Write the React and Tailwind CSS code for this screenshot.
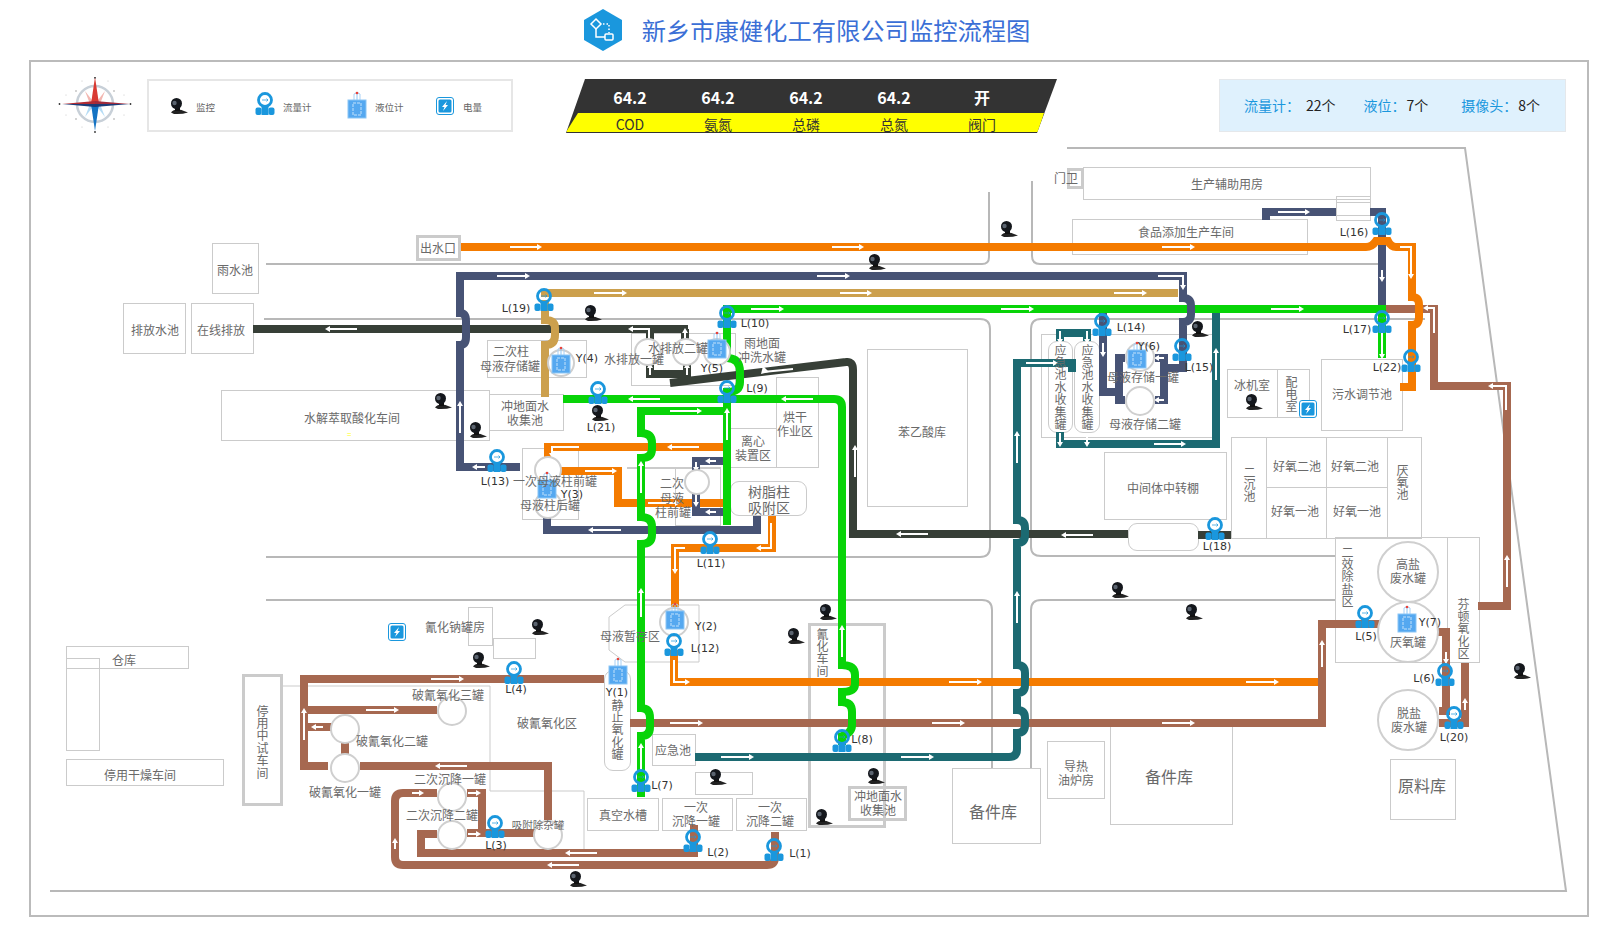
import React from 'react';

const PIPE = {
  orange: '#f47b00',
  navy: '#475375',
  tan: '#cca04d',
  green: '#08d408',
  dark: '#373f37',
  teal: '#1c6a72',
  brown: '#a66850',
};

// drawing order matters, the later pipe hops over the earlier one
const pipes = [
  ['dark', 'M253 329 H688'],
  ['dark', 'M650 329 V340'],
  ['dark', 'M685 329 V340'],
  ['dark', 'M650 362 V374 H687 V362'],
  ['dark', 'M670 383 L846 362 Q853 361 853 370 V534 H1128'],
  ['dark', 'M1198 535 H1231'],
  ['brown', 'M604 679 H304 V766 H328'],
  ['brown', 'M304 710 H437'],
  ['brown', 'M308 727 H335'],
  ['brown', 'M345 743 V755'],
  ['brown', 'M360 766 H548 V820'],
  ['brown', 'M775 832 V857 Q775 865 767 865 H403 Q395 865 395 857 V801 Q395 793 403 793 H437'],
  ['brown', 'M467 793 H482 V833'],
  ['brown', 'M467 833 H535'],
  ['brown', 'M437 834 H421 V853 H698'],
  ['brown', 'M694 825 V857'],
  ['brown', 'M630 723 H1322 V624 H1380'],
  ['brown', 'M1438 632 H1446 V711 H1439'],
  ['brown', 'M1439 723 H1465 V663'],
  ['brown', 'M1386 309 H1434 V386 H1507 V606 H1478'],
  ['orange', 'M548 457 V447 H723'],
  ['orange', 'M560 471 H618 V503 H723'],
  ['orange', 'M772 516 V548 H675 V607'],
  ['orange', 'M674 650 V682 H1318'],
  ['navy', 'M547 514 V530 H757 V516'],
  ['navy', 'M723 461 H696 V470'],
  ['navy', 'M723 512 H696 V493'],
  ['tan', 'M541 293 H1178'],
  ['tan', 'M545 397 V345 Q555 345 555 335 V328 Q555 320 545 320 V300'],
  ['green', 'M1386 309 H727 V358 Q740 358 740 372 V382 Q740 392 727 392 V525'],
  ['green', 'M563 399 H834 Q842 399 842 407 V665 Q855 665 855 675 V684 Q855 692 842 692 V702 Q852 702 852 712 V725 Q852 733 842 736 V745'],
  ['green', 'M727 411 H641 V433 Q652 433 652 443 V449 Q652 458 641 458 V517 Q652 517 652 527 V535 Q652 544 641 544 V708 Q650 708 650 718 V727 Q650 736 641 736 V797'],
  ['green', 'M1382 309 V358'],
  ['navy', 'M520 467 H460 V345 Q466 345 466 337 V321 Q466 313 460 313 V276 H1183 V298 Q1191 298 1191 306 V314 Q1191 322 1183 322 V368 H1164'],
  ['navy', 'M1155 358 H1164 V400 H1155'],
  ['navy', 'M1103 313 V392 H1119'],
  ['navy', 'M1125 358 H1119 V400 H1125'],
  ['navy', 'M1266 220 V212 H1336'],
  ['navy', 'M1370 212 H1382 V305'],
  ['orange', 'M461 247 H1366 Q1372 247 1376 241 H1388 Q1391 247 1396 247 H1412 V297 Q1419 297 1419 305 V317 Q1419 325 1412 325 V387 H1400'],
  ['teal', 'M1076 363 H1017 V520 Q1025 520 1025 528 V535 Q1025 543 1017 543 V665 Q1025 665 1025 673 V685 Q1025 693 1017 693 V710 Q1025 710 1025 718 V725 Q1025 733 1017 733 V749 Q1017 757 1009 757 H695'],
  ['teal', 'M1072 359 V372'],
  ['teal', 'M1060 341 V333 H1087 V341'],
  ['teal', 'M1060 432 V444 H1216 V313'],
];

const arrows = [
  [510, 247, 540, 247], [832, 247, 862, 247], [1162, 247, 1193, 247], [1400, 247, 1411, 247, 1411, 277],
  [497, 276, 528, 276], [817, 276, 848, 276], [1158, 276, 1183, 276, 1183, 288],
  [594, 293, 625, 293], [840, 293, 870, 293], [1114, 293, 1145, 293],
  [751, 309, 782, 309], [1001, 309, 1032, 309], [1271, 309, 1302, 309],
  [1278, 212, 1308, 212], [1103, 343, 1103, 355], [1382, 270, 1382, 280], [1382, 330, 1382, 357],
  [1434, 333, 1434, 308, 1425, 308], [1506, 410, 1506, 386, 1490, 386],
  [1216, 380, 1216, 350], [1154, 444, 1184, 444], [1017, 463, 1017, 433], [1026, 363, 1056, 363], [1017, 623, 1017, 593],
  [1060, 331, 1060, 342], [1087, 331, 1087, 342], [1060, 433, 1060, 445], [1087, 433, 1087, 445],
  [1164, 358, 1156, 358], [1164, 400, 1156, 400],
  [357, 329, 327, 329], [649, 340, 649, 329, 630, 329], [685, 343, 685, 330], [650, 375, 650, 365], [687, 375, 687, 365],
  [793, 369, 763, 372], [855, 477, 855, 447], [928, 534, 898, 534], [1093, 535, 1063, 535],
  [460, 433, 460, 403], [485, 467, 474, 467],
  [660, 399, 630, 399], [813, 399, 783, 399], [842, 657, 842, 627],
  [670, 411, 700, 411], [727, 440, 727, 410], [641, 493, 641, 463], [641, 617, 641, 590], [641, 770, 641, 745],
  [699, 447, 669, 447], [579, 447, 552, 447, 552, 456], [585, 471, 615, 471], [648, 503, 678, 503],
  [621, 530, 590, 530], [716, 461, 707, 461], [716, 512, 707, 512], [696, 462, 696, 470], [696, 490, 696, 505],
  [771, 523, 771, 548, 758, 548], [685, 548, 675, 548, 675, 572], [674, 660, 674, 682, 688, 682],
  [949, 682, 980, 682], [1246, 682, 1277, 682],
  [670, 723, 701, 723], [932, 723, 963, 723], [1162, 723, 1193, 723], [1322, 667, 1322, 642], [1507, 587, 1507, 557],
  [1446, 652, 1446, 662], [1465, 710, 1465, 700],
  [431, 679, 462, 679], [366, 710, 397, 710], [323, 727, 313, 727], [304, 740, 304, 710], [467, 766, 437, 766],
  [412, 793, 422, 793], [468, 793, 479, 793], [468, 834, 479, 834], [395, 849, 395, 840], [597, 853, 567, 853], [579, 865, 549, 865],
  [721, 757, 752, 757], [901, 757, 932, 757],
];

const tanks = [
  [648, 352, 13], [686, 352, 13], [717, 352, 13], [561, 363, 13], [548, 470, 13], [548, 505, 13], [697, 482, 12],
  [1140, 357, 14], [1140, 401, 14], [674, 622, 14], [452, 711, 14], [345, 729, 14], [345, 768, 14], [452, 797, 14], [452, 835, 14], [548, 835, 14],
  [1408, 572, 30], [1408, 632, 30], [1408, 720, 30],
];

const flowMeters = [
  [774, 853], [693, 844], [495, 830], [514, 676], [1365, 620], [1445, 678], [641, 784], [842, 744], [727, 395], [727, 320], [710, 546],
  [674, 648], [497, 464], [1102, 328], [1182, 353], [1382, 227], [1382, 325], [1215, 532], [544, 303], [1454, 721], [598, 396], [1411, 364],
];

const levelMeters = [[618, 675], [675, 620], [547, 489], [561, 364], [717, 349], [1137, 359], [1407, 623]];

const cameras = [
  [1008, 229], [876, 262], [592, 313], [1199, 329], [442, 401], [477, 430], [599, 413], [1253, 402], [1119, 590], [1193, 612],
  [827, 612], [795, 636], [539, 627], [480, 660], [717, 777], [875, 776], [823, 817], [577, 879], [1521, 671],
];

// x1, y1, x2, y2, thick
const boxes = [
  [212, 243, 258, 293], [123, 303, 185, 353], [191, 303, 253, 353], [416, 235, 460, 260, 1], [221, 390, 489, 440],
  [487, 340, 586, 377], [489, 394, 563, 430], [631, 333, 735, 385], [776, 377, 818, 467], [730, 428, 776, 467],
  [627, 467, 720, 467], [675, 467, 720, 525], [522, 448, 578, 519], [867, 349, 967, 506], [1041, 334, 1212, 437],
  [1104, 452, 1226, 519], [1067, 168, 1083, 188, 1], [1083, 167, 1370, 199], [1336, 196, 1370, 220], [1336, 202, 1370, 215],
  [1072, 219, 1307, 254], [1321, 359, 1402, 430], [1227, 369, 1277, 417], [1277, 369, 1309, 417], [1231, 437, 1421, 538],
  [1266, 437, 1326, 487], [1326, 437, 1387, 487], [1266, 487, 1326, 538], [1326, 487, 1387, 538], [1335, 537, 1479, 662], [1447, 537, 1479, 662],
  [242, 674, 282, 805, 1], [468, 607, 492, 645], [493, 638, 535, 658], [652, 734, 695, 765], [587, 798, 658, 830], [662, 798, 732, 830], [736, 798, 806, 830],
  [695, 772, 752, 794], [808, 623, 885, 827, 1], [848, 786, 906, 820, 1], [952, 768, 1040, 843], [1047, 741, 1104, 798], [1110, 723, 1232, 824], [1390, 759, 1455, 819],
  [66, 646, 188, 668], [66, 658, 99, 750], [66, 759, 223, 785],
];

const pills = [[730, 481, 806, 515], [1048, 341, 1072, 432], [1074, 341, 1099, 432], [1128, 523, 1198, 550], [604, 670, 630, 770]];

// text, centre x, centre y, size
const labels = [
  ['雨水池', 235, 270], ['排放水池', 155, 330], ['在线排放', 221, 330], ['出水口', 438, 248], ['水解萃取酸化车间', 352, 418],
  ['二次柱', 511, 351], ['母液存储罐', 510, 366], ['冲地面水', 525, 406], ['收集池', 525, 420], ['水排放二罐', 678, 348], ['水排放一罐', 634, 359],
  ['雨地面', 762, 343], ['冲洗水罐', 762, 357], ['烘干', 795, 417], ['作业区', 795, 431], ['离心', 753, 441], ['装置区', 753, 455],
  ['一次母液柱前罐', 555, 481], ['母液柱后罐', 550, 505], ['二次', 672, 483], ['母液', 672, 498], ['柱前罐', 673, 512],
  ['树脂柱', 769, 491, 14], ['吸附区', 769, 507, 14], ['苯乙酸库', 922, 432], ['中间体中转棚', 1163, 488],
  ['门卫', 1066, 178], ['生产辅助用房', 1227, 184], ['食品添加生产车间', 1186, 232], ['母液存储一罐', 1143, 377], ['母液存储二罐', 1145, 424],
  ['冰机室', 1252, 385], ['污水调节池', 1362, 394], ['好氧二池', 1297, 466], ['好氧二池', 1355, 466], ['好氧一池', 1295, 511], ['好氧一池', 1357, 511],
  ['高盐', 1408, 564], ['废水罐', 1408, 578], ['厌氧罐', 1408, 642], ['脱盐', 1409, 713], ['废水罐', 1409, 727],
  ['氰化钠罐房', 455, 627], ['母液暂存区', 630, 636], ['破氰氧化三罐', 448, 695], ['破氰氧化二罐', 392, 741], ['破氰氧化一罐', 345, 792], ['破氰氧化区', 547, 723],
  ['二次沉降一罐', 450, 779], ['二次沉降二罐', 442, 815], ['吸附除杂罐', 538, 825, 10.5], ['应急池', 673, 750], ['真空水槽', 623, 815],
  ['一次', 696, 807], ['沉降一罐', 696, 821], ['一次', 770, 807], ['沉降二罐', 770, 821], ['冲地面水', 878, 796], ['收集池', 878, 810],
  ['备件库', 993, 811, 16], ['导热', 1076, 766], ['油炉房', 1076, 780], ['备件库', 1169, 776, 16], ['原料库', 1422, 785, 16],
  ['仓库', 124, 660], ['停用干燥车间', 140, 775],
];

// text, centre x, first char y
const verticalLabels = [
  ['应急池水收集罐', 1060, 350], ['应急池水收集罐', 1087, 350], ['配电室', 1291, 382], ['二沉池', 1249, 472], ['厌氧池', 1402, 470],
  ['二效除盐区', 1347, 552], ['芬顿氧化区', 1463, 604], ['停用中试车间', 262, 711], ['静止氧化罐', 617, 705], ['氰化车间', 822, 634],
];

const tags = [
  ['L(1)', 800, 853], ['L(2)', 718, 852], ['L(3)', 496, 845], ['L(4)', 516, 689], ['L(5)', 1366, 636], ['L(6)', 1424, 678], ['L(7)', 662, 785],
  ['L(8)', 862, 739], ['L(9)', 757, 388], ['L(10)', 755, 323], ['L(11)', 711, 563], ['L(12)', 705, 648], ['L(13)', 495, 481], ['L(14)', 1131, 327],
  ['L(15)', 1199, 367], ['L(16)', 1354, 232], ['L(17)', 1357, 329], ['L(18)', 1217, 546], ['L(19)', 516, 308], ['L(20)', 1454, 737], ['L(21)', 601, 427], ['L(22)', 1387, 367],
  ['Y(1)', 617, 692], ['Y(2)', 706, 626], ['Y(3)', 572, 494], ['Y(4)', 587, 358], ['Y(5)', 712, 368], ['Y(6)', 1149, 346], ['Y(7)', 1430, 622],
];

const readings = [['64.2', 'COD'], ['64.2', '氨氮'], ['64.2', '总磷'], ['64.2', '总氮'], ['开', '阀门']];

function Arrow({ pts }) {
  const n = pts.length;
  const ex = pts[n - 2];
  const ey = pts[n - 1];
  const dx = Math.sign(ex - pts[n - 4]);
  const dy = Math.sign(ey - pts[n - 3]);
  const line = pts.reduce((acc, v, i) => acc + (i % 2 === 0 ? `${i ? ' L' : 'M'}${v}` : ` ${v}`), '');
  const head = `${ex + dx * 2},${ey + dy * 2} ${ex - dx * 3 - dy * 3},${ey - dy * 3 + dx * 3} ${ex - dx * 3 + dy * 3},${ey - dy * 3 - dx * 3}`;
  return (
    <g>
      <path d={line} fill="none" stroke="#fff" strokeWidth="2" />
      <polygon points={head} fill="#fff" />
    </g>
  );
}

function FlowMeter({ x, y }) {
  return (
    <g transform={`translate(${x} ${y})`}>
      <circle cx="0" cy="-7" r="6.5" fill="none" stroke="#1a97dd" strokeWidth="2.8" />
      <path d="M-3 -7 H3 M1.5 -8.5 L3 -7 L1.5 -5.5" fill="none" stroke="#1a97dd" strokeOpacity="0.7" strokeWidth="1" />
      <rect x="-3.5" y="-1" width="7" height="9" fill="#1a97dd" />
      <rect x="-9.5" y="0.5" width="6" height="7.5" rx="2" fill="#1a97dd" />
      <rect x="3.5" y="0.5" width="6" height="7.5" rx="2" fill="#1a97dd" />
    </g>
  );
}

function LevelMeter({ x, y }) {
  return (
    <g transform={`translate(${x} ${y})`}>
      <path d="M-3 -9 V-15 Q0 -18 3 -15 V-9" fill="none" stroke="#a8d0f5" strokeWidth="1" />
      <path d="M0 -16 V6" stroke="#8cc6f5" strokeWidth="1" />
      <circle cx="0" cy="-16" r="1.3" fill="#e8433a" />
      <rect x="-9" y="-9" width="18" height="18" fill="#55a8f0" stroke="#8cc6f5" strokeWidth="1" />
      <rect x="-4" y="-6" width="8" height="12" fill="none" stroke="#c4e2fb" strokeWidth="1" strokeDasharray="3 1" />
    </g>
  );
}

function PowerMeter({ x, y }) {
  return (
    <g transform={`translate(${x} ${y})`}>
      <rect x="-8.5" y="-8.5" width="17" height="17" rx="2.5" fill="#fff" stroke="#1a97dd" strokeWidth="1" />
      <rect x="-6.5" y="-6.5" width="13" height="13" rx="1.5" fill="#1a97dd" />
      <polygon points="2,-5 -3,1 -0.5,1 -2,5 3,-1 0.5,-1" fill="#fff" />
    </g>
  );
}

function Camera({ x, y }) {
  return (
    <g transform={`translate(${x} ${y})`}>
      <path d="M-7 6.5 Q-5 3.5 0 3.5 Q4 3.5 6 5 L10 6.5 Q4 8.5 -4 8 Z" fill="#222" />
      <rect x="-3" y="1" width="5" height="4" fill="#111" />
      <circle cx="-1.5" cy="-2.5" r="5.5" fill="#14171c" />
      <circle cx="-3.5" cy="-3" r="2.2" fill="#5b6470" />
    </g>
  );
}

function Compass() {
  return (
    <svg width="74" height="56" viewBox="0 0 74 56" className="shrink-0 -mt-[2px]">
      <circle cx="37" cy="27" r="18" fill="none" stroke="#c8d0d8" strokeWidth="2.5" />
      <polygon points="37,27 27,14 32,27" fill="#f3b6b0" />
      <polygon points="37,27 47,14 42,27" fill="#f3b6b0" />
      <polygon points="37,27 27,40 32,27" fill="#b5dcf5" />
      <polygon points="37,27 47,40 42,27" fill="#b5dcf5" />
      <polygon points="37,0 33,27 41,27" fill="#d93a32" />
      <polygon points="37,54 33,27 41,27" fill="#1574c4" />
      <polygon points="4,27 37,24 37,27" fill="#b02c34" />
      <polygon points="4,27 37,30 37,27" fill="#1c3c78" />
      <polygon points="72,27 37,24 37,27" fill="#a02c3c" />
      <polygon points="72,27 37,30 37,27" fill="#1c3c78" />
      <circle cx="37" cy="0.8" r="0.9" fill="#333" />
      <circle cx="37" cy="55" r="0.9" fill="#333" />
      <circle cx="1.5" cy="27" r="0.9" fill="#333" />
      <circle cx="72.5" cy="27" r="0.9" fill="#333" />
      <circle cx="18" cy="14" r="0.7" fill="#888" />
      <circle cx="56" cy="14" r="0.7" fill="#888" />
      <circle cx="18" cy="42" r="0.7" fill="#888" />
      <circle cx="56" cy="42" r="0.7" fill="#888" />
      <circle cx="24" cy="4" r="0.5" fill="#bbb" />
      <circle cx="50" cy="4" r="0.5" fill="#bbb" />
      <circle cx="8" cy="18" r="0.5" fill="#bbb" />
      <circle cx="66" cy="18" r="0.5" fill="#bbb" />
      <circle cx="8" cy="38" r="0.5" fill="#bbb" />
      <circle cx="66" cy="38" r="0.5" fill="#bbb" />
      <circle cx="24" cy="50" r="0.5" fill="#bbb" />
      <circle cx="50" cy="50" r="0.5" fill="#bbb" />
    </svg>
  );
}

function LegendItem({ children, label, width }) {
  return (
    <div className={`flex items-center ${width}`}>
      <svg width="36" height="30" viewBox="-18 -15 36 30" className="shrink-0">{children}</svg>
      <span className="text-[9.5px] mt-[3px] text-[#666]">{label}</span>
    </div>
  );
}

export default function App() {
  return (
    <div className="relative w-[1620px] h-[946px] bg-white overflow-hidden" style={{ fontFamily: '"Noto Sans CJK SC", "Liberation Sans", sans-serif' }}>
      {/* Header */}
      <header className="h-[60px] flex items-center justify-center gap-[20px] pr-[6px]">
        <svg width="38" height="42" viewBox="0 0 38 42">
          <polygon points="19,0 38,11 38,31 19,42 0,31 0,11" fill="#1a97dd" />
          <polygon points="12,10 17,15 12,20 7,15" fill="none" stroke="#fff" strokeWidth="1.5" />
          <path d="M12 20 V28 H21" fill="none" stroke="#fff" strokeWidth="1.5" />
          <rect x="21" y="25" width="8" height="6" rx="1" fill="none" stroke="#fff" strokeWidth="1.5" />
          <path d="M19 15 H25 V24" fill="none" stroke="#fff" strokeWidth="1.5" strokeDasharray="1.5 2" />
        </svg>
        <h1 className="text-[24.3px] font-normal leading-none text-[#3b6fd6]">新乡市康健化工有限公司监控流程图</h1>
      </header>

      {/* Frame with the top row */}
      <div className="ml-[29px] w-[1560px] h-[857px] border-2 border-[#bbb]">
        <div className="flex items-start pt-[17px] pl-[27px]">
          <Compass />
          <div className="ml-[15px] w-[366px] h-[53px] border-2 border-[#e6e6e6] flex items-center pl-[11px]">
            <LegendItem label="监控" width="w-[87px]"><Camera x={0} y={0} /></LegendItem>
            <LegendItem label="流量计" width="w-[92px]"><FlowMeter x={0} y={1} /></LegendItem>
            <LegendItem label="液位计" width="w-[88px]"><LevelMeter x={0} y={3} /></LegendItem>
            <LegendItem label="电量" width="w-[70px]"><PowerMeter x={0} y={0} /></LegendItem>
          </div>

          <div className="relative ml-[53px] w-[491px] h-[54px] bg-[#333] [clip-path:polygon(19px_0,491px_0,471px_100%,0_100%)]">
            <div className="absolute left-0 bottom-[1px] w-[478px] h-[19px] bg-[#ffff00] [clip-path:polygon(12px_0,478px_0,472px_100%,0_100%)]" />
            <div className="relative ml-[20px] w-[440px] grid grid-cols-5 text-center">
              {readings.map(([value, name], i) => (
                <div key={i}>
                  <div className="h-[34px] leading-[36px] text-[16px] font-bold text-white">{value}</div>
                  <div className="h-[19px] leading-[22px] text-[14px] text-[#333]">{name}</div>
                </div>
              ))}
            </div>
          </div>

          <div className="ml-[162px] w-[347px] h-[53px] bg-[#dff1fd] border border-[#e5e8eb] flex items-center pl-[24px] text-[14px] text-[#222]">
            <span className="text-[#1a97dd]">流量计：</span>
            <span className="ml-[6px]">22个</span>
            <span className="ml-[28px] text-[#1a97dd]">液位</span>
            <span className="text-[#1a97dd]">：</span>
            <span className="ml-[1px]">7个</span>
            <span className="ml-[33px] text-[#1a97dd]">摄像头</span>
            <span className="text-[#1a97dd]">：</span>
            <span className="ml-[1px]">8个</span>
          </div>
        </div>
      </div>

      {/* Plant diagram, everything below sits on page coordinates */}
      <div className="absolute left-0 top-0 w-[1620px] h-[946px] pointer-events-none">
        {boxes.map(([x1, y1, x2, y2, thick], i) => (
          <div
            key={i}
            className={`absolute border-[#cbcbcb] ${thick ? 'border-[3px]' : 'border'}`}
            style={{ left: x1, top: y1, width: x2 - x1 + 1, height: y2 - y1 + 1 }}
          />
        ))}
        {pills.map(([x1, y1, x2, y2], i) => (
          <div
            key={i}
            className="absolute border border-[#cbcbcb] rounded-[9px]"
            style={{ left: x1, top: y1, width: x2 - x1 + 1, height: y2 - y1 + 1 }}
          />
        ))}

        <svg className="absolute left-0 top-0" width="1620" height="946" viewBox="0 0 1620 946">
          <g fill="none" stroke="#b8b8b8" strokeWidth="2">
            <path d="M266 264 H982 Q989 264 989 257 V192" />
            <path d="M1032 181 V256 Q1032 264 1040 264 H1378" />
            <path d="M264 319 H980 Q990 319 990 329 V547 Q990 557 980 557 H266" />
            <path d="M1425 319 H1041 Q1031 319 1031 329 V547 Q1031 556 1041 556 H1335" />
            <path d="M266 600 H982 Q992 600 992 610 V768" />
            <path d="M1335 600 H1041 Q1031 600 1031 610 V768" />
            <path d="M1067 148 H1465 L1566 891 H50" />
          </g>
          <path d="M282 686 H490 V791 H584 V850" fill="none" stroke="#cbcbcb" strokeWidth="1" />
          <polygon points="609,617 625,605 699,605 699,662 625,662 609,650" fill="none" stroke="#cbcbcb" strokeWidth="1" />

          <g fill="none" strokeWidth="8">
            {pipes.map(([color, d], i) => (
              <path key={i} d={d} stroke={PIPE[color]} />
            ))}
          </g>
          {arrows.map((pts, i) => (
            <Arrow key={i} pts={pts} />
          ))}
          {tanks.map(([x, y, r], i) => (
            <circle key={i} cx={x} cy={y} r={r} fill="#fff" stroke="#cfcfcf" strokeWidth="2" />
          ))}
          {levelMeters.map(([x, y], i) => (
            <LevelMeter key={i} x={x} y={y} />
          ))}
          {flowMeters.map(([x, y], i) => (
            <FlowMeter key={i} x={x} y={y} />
          ))}
          {cameras.map(([x, y], i) => (
            <Camera key={i} x={x} y={y} />
          ))}
          <PowerMeter x={1308} y={409} />
          <PowerMeter x={397} y={632} />
        </svg>

        {labels.map(([text, x, y, size], i) => (
          <span
            key={i}
            className="absolute -translate-x-1/2 -translate-y-1/2 whitespace-nowrap leading-none text-[#6a6a6a]"
            style={{ left: x, top: y, fontSize: size || 12 }}
          >
            {text}
          </span>
        ))}
        {verticalLabels.map(([text, x, y], i) => (
          <div
            key={i}
            className="absolute -translate-x-1/2 [writing-mode:vertical-rl] [text-orientation:upright] text-[12px] leading-none tracking-[0.4px] whitespace-nowrap text-[#6a6a6a]"
            style={{ left: x, top: y - 6 }}
          >
            {text}
          </div>
        ))}
        {tags.map(([text, x, y], i) => (
          <span
            key={i}
            className="absolute -translate-x-1/2 -translate-y-1/2 whitespace-nowrap leading-none text-[11px] text-[#333]"
            style={{ left: x, top: y, fontFamily: '"DejaVu Sans", sans-serif' }}
          >
            {text}
          </span>
        ))}
        <span className="absolute left-[347px] top-[430px] text-[8px] leading-none text-[#ffff00]">=</span>
      </div>
    </div>
  );
}
